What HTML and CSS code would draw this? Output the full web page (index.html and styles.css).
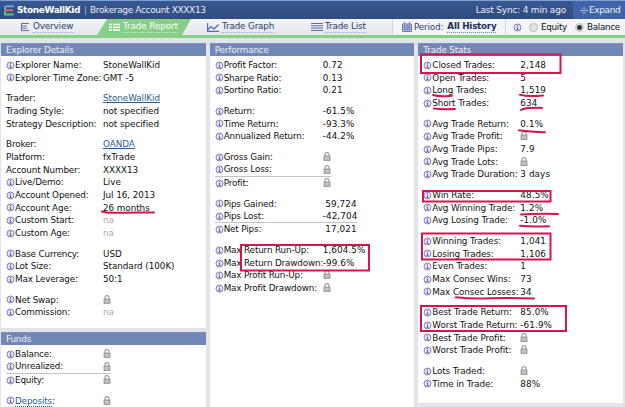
FILE: index.html
```html
<!DOCTYPE html>
<html>
    <head>
        <meta charset="utf-8">
        <title>StoneWallKid - Trade Report</title>
        <link rel="stylesheet" href="styles.css">
    </head>

    <body>
        <svg class="defs">
            <symbol id="info" viewBox="0 0 9 9">
                <circle cx="4.5" cy="4.5" r="3.5" fill="#e6e6f6" stroke="#7472ab" stroke-width=".9"/>
                <path d="M4.5 2.1v1M3.7 4.1h.9v2.3M3.5 6.5h2" fill="none" stroke="#5653a3" stroke-width=".9"/>
            </symbol>
            <symbol id="lock" viewBox="0 0 8 9">
                <path d="M2 4V2.6a2 2 0 0 1 4 0V4" fill="none" stroke="#999" stroke-width="1.1"/>
                <rect x="1" y="4" width="6" height="4.4" fill="#b5b5b5" stroke="#929292" stroke-width=".8"/>
                <path d="M2 5.5h4M2 7h4" stroke="#d4d4d4" stroke-width=".6"/>
            </symbol>
        </svg>

        <div class="topbar">
            <svg class="logo" viewBox="0 0 10 11">
                <path d="M2 1.2h8M1 1v4" stroke="#61a8ee" stroke-width="2"/>
                <path d="M1 5.3h8" stroke="#ee5a62" stroke-width="2"/>
                <path d="M1 6v3.5h8.5" fill="none" stroke="#66c477" stroke-width="2"/>
            </svg>
            <b class="user">StoneWallKid</b>
            <span class="bar">|</span>
            <span class="account">Brokerage Account XXXX13</span>
            <span class="sync">Last Sync: 4 min ago</span>
            <div class="expand">
                <svg viewBox="0 0 8 9"><path d="M1.5 3L4 .8 6.5 3zM1.5 6L4 8.2 6.5 6z" fill="#7d9bd2"/><path d="M0 4.5h8" stroke="#a4bbe4"/></svg>
                <span>Expand</span>
            </div>
        </div>

        <div class="tabs">
            <div class="tab overview">
                <svg viewBox="0 0 9 8"><path d="M0 .5h8M0 3h6M0 5.2h6M0 7.5h8M.5 0v8" stroke="#5c70a5" fill="none"/></svg>
                <a>Overview</a>
            </div>
            <div class="tab report">
                <svg viewBox="0 0 11 8"><path d="M0 1.5h3M0 4.2h3M0 7h3M4 1.5h7M4 4.2h7M4 7h7" stroke="#fff" stroke-width="1.6"/></svg>
                <a>Trade Report</a>
            </div>
            <div class="tab graph">
                <svg viewBox="0 0 12 9"><path d="M.6 0v8.4H12M1 6.5l3-3 3 2.5 4.5-4.5" fill="none" stroke="#556ba3" stroke-width="1.2"/></svg>
                <a>Trade Graph</a>
            </div>
            <div class="tab list">
                <svg viewBox="0 0 12 8"><path d="M0 .5h12M0 2.8h12M0 5.1h12M0 7.5h12" stroke="#5b6ea3"/></svg>
                <a>Trade List</a>
            </div>
            <div class="period">
                <svg viewBox="0 0 10 10"><path d="M.5 2h9v7.5h-9zM.5 4h9M.5 5.8h9M.5 7.6h9M2.8 2v7.5M5 2v7.5M7.2 2v7.5M2.5 0v2M7.5 0v2" fill="none" stroke="#5b70ab" stroke-width=".9"/></svg>
                <span>Period:</span>
                <b>All History</b>
            </div>
            <div class="mode">
                <svg class="info"><use href="#info"/></svg>
                <i class="radio"></i><span class="equity">Equity</span>
                <i class="radio on"></i><span class="balance">Balance</span>
            </div>
        </div>

        <div class="columns">
            <div class="column c1">
                <div class="panel">
                    <h2>Explorer Details</h2>
                    <div class="rows" id="details"></div>
                </div>
                <div class="panel funds">
                    <h2>Funds</h2>
                    <div class="rows" id="funds"></div>
                </div>
            </div>
            <div class="column c2">
                <div class="panel">
                    <h2>Performance</h2>
                    <div class="rows" id="performance"></div>
                </div>
            </div>
            <div class="column c3">
                <div class="panel">
                    <h2>Trade Stats</h2>
                    <div class="rows" id="stats"></div>
                </div>
            </div>
        </div>

        <!-- red marker pen over the report -->
        <svg class="marks" viewBox="0 0 625 407">
            <rect x="421" y="54.5" width="139.5" height="18.5"/>
            <rect x="423" y="191" width="127.5" height="10.5"/>
            <rect x="422" y="233.5" width="128.5" height="26"/>
            <rect x="421" y="306" width="145" height="25"/>
            <rect x="241" y="245" width="128" height="25.5"/>
            <path d="M102 211.5Q106 213 117 212.7T154 212.5"/>
            <path d="M433 95Q439 97 452 95.7"/>
            <path d="M520 94.8Q528 97 543 95.5"/>
            <path d="M434 108.5Q441 109.5 455 109"/>
            <path d="M521 110Q526 107 542 108"/>
            <path d="M519 130.3Q530 132 545 132.3"/>
            <path d="M521 214.5Q536 213.5 558 214"/>
            <path d="M520 225.8Q532 227 549 226.3"/>
            <path d="M456 297.3Q470 299 490 298.3T534 298.5"/>
        </svg>

        <script>
            // [label, value, flags]: p = no info icon, a = link value, l = link label,
            // n = greyed out, s = sum line below, r = right aligned
            // null starts a new group
            var details = [
                ["Explorer Name:", "StoneWallKid"],
                ["Explorer Time Zone:", "GMT -5"],
                null,
                ["Trader:", "StoneWallKid", "pa"],
                ["Trading Style:", "not specified", "p"],
                ["Strategy Description:", "not specified", "p"],
                null,
                ["Broker:", "OANDA", "pa"],
                ["Platform:", "fxTrade", "p"],
                ["Account Number:", "XXXX13", "p"],
                ["Live/Demo:", "Live"],
                ["Account Opened:", "Jul 16, 2013"],
                ["Account Age:", "26 months"],
                ["Custom Start:", "na", "n"],
                ["Custom Age:", "na", "n"],
                null,
                ["Base Currency:", "USD"],
                ["Lot Size:", "Standard (100K)"],
                ["Max Leverage:", "50:1"],
                null,
                ["Net Swap:", "lock"],
                ["Commission:", "na", "n"]
            ];

            var funds = [
                ["Balance:", "lock"],
                ["Unrealized:", "lock", "s"],
                ["Equity:", "lock"],
                null,
                ["Deposits:", "lock", "l"]
            ];

            var performanceRows = [
                ["Profit Factor:", "0.72"],
                ["Sharpe Ratio:", "0.13"],
                ["Sortino Ratio:", "0.21"],
                null,
                ["Return:", "-61.5%"],
                ["Time Return:", "-93.3%"],
                ["Annualized Return:", "-44.2%"],
                null,
                ["Gross Gain:", "lock"],
                ["Gross Loss:", "lock", "s"],
                ["Profit:", "lock"],
                null,
                ["Pips Gained:", "59,724", "r"],
                ["Pips Lost:", "-42,704", "rs"],
                ["Net Pips:", "17,021", "r"],
                null,
                ["Max Return Run-Up:", "1,604.5%"],
                ["Max Return Drawdown:", "-99.6%"],
                ["Max Profit Run-Up:", "lock"],
                ["Max Profit Drawdown:", "lock"]
            ];

            var stats = [
                ["Closed Trades:", "2,148"],
                ["Open Trades:", "5"],
                ["Long Trades:", "1,519"],
                ["Short Trades:", "634"],
                null,
                ["Avg Trade Return:", "0.1%"],
                ["Avg Trade Profit:", "lock"],
                ["Avg Trade Pips:", "7.9"],
                ["Avg Trade Lots:", "lock"],
                ["Avg Trade Duration:", "3 days"],
                null,
                ["Win Rate:", "48.5%"],
                ["Avg Winning Trade:", "1.2%"],
                ["Avg Losing Trade:", "-1.0%"],
                null,
                ["Winning Trades:", "1,041"],
                ["Losing Trades:", "1,106"],
                ["Even Trades:", "1"],
                ["Max Consec Wins:", "73"],
                ["Max Consec Losses:", "34"],
                null,
                ["Best Trade Return:", "85.0%"],
                ["Worst Trade Return:", "-61.9%"],
                ["Best Trade Profit:", "lock"],
                ["Worst Trade Profit:", "lock"],
                null,
                ["Lots Traded:", "lock"],
                ["Time in Trade:", "88%"]
            ];

            function genRow(row) {
                var flags = row[2] || "";
                var has = function (f) { return flags.indexOf(f) >= 0; };
                var label = row[0];
                var value = row[1];

                if (has("l")) label = "<a class='dotted'>" + label.slice(0, -1) + "</a>:";
                if (value == "lock") value = "<svg class='lock'><use href='#lock'/></svg>";
                if (has("a")) value = "<a>" + value + "</a>";

                var r = "<div class='row" + (has("s") ? " sum" : "") + (has("r") ? " num" : "") + "'>";
                r += "<div class='label'>";
                if (!has("p")) r += "<svg class='info'><use href='#info'/></svg>";
                r += "<span>" + label + "</span></div>";
                r += "<div class='value" + (has("n") ? " na" : "") + "'>" + value + "</div>";
                return r + "</div>";
            }

            function renderRows(id, rows) {
                var r = "<div class='group'>";
                for (var i = 0; i < rows.length; ++i) {
                    r += rows[i] ? genRow(rows[i]) : "</div><div class='group'>";
                }
                document.getElementById(id).innerHTML = r + "</div>";
            }

            renderRows("details", details);
            renderRows("funds", funds);
            renderRows("performance", performanceRows);
            renderRows("stats", stats);
        </script>
    </body>
</html>
```

FILE: styles.css
```css
* {
    box-sizing: border-box;
}

body {
    margin: 0;
    height: 407px;
    overflow: hidden;
    position: relative;
    background-color: #e3e4ea;
    font-family: Verdana, "DejaVu Sans", sans-serif;
    font-size: 8.8px;
    letter-spacing: -0.15px;
    color: #111;
    white-space: nowrap;
}

svg {
    display: block;
    flex: none;
}

.defs {
    display: none;
}

.topbar {
    display: flex;
    align-items: center;
    height: 19px;
    padding-left: 4px;
    border-top: 1px solid #7f9fd0;
    background: linear-gradient(#37588f, #304b80);
    color: #e9eef8;
    font-size: 9px;
}

.logo {
    width: 10px;
    height: 11px;
}

.user {
    width: 67px;
    margin-left: 3px;
    color: #fff;
    letter-spacing: -0.4px;
}

.bar {
    width: 6px;
    color: #a9b8d6;
}

.account {
    letter-spacing: -0.36px;
}

.sync {
    margin-left: auto;
    margin-right: 7px;
    letter-spacing: -0.2px;
}

.expand {
    display: flex;
    align-items: center;
    width: 52px;
    height: 18px;
    padding-left: 7px;
    background-color: #4164a8;
    letter-spacing: -0.4px;
}

.expand svg {
    width: 8px;
    height: 9px;
    margin-right: 1px;
}

.tabs {
    display: flex;
    height: 19px;
    border-bottom: 3px solid #86cf86;
    background: linear-gradient(#f3f4f7, #e4e6ec);
    color: #263f68;
}

.tab {
    display: flex;
    align-items: center;
}

.tab a {
    line-height: 11px;
    border-bottom: 1px dotted #9fb0cc;
}

.overview {
    width: 97px;
    padding-left: 21px;
}

.overview svg {
    width: 9px;
    height: 8px;
    margin-right: 3px;
}

.report {
    width: 94px;
    padding-left: 12px;
    background-color: #86cf86;
    clip-path: polygon(10px 0, 100% 0, 85px 100%, 0 100%);
    color: #fff;
}

.report a {
    letter-spacing: -0.1px;
    border-bottom-color: #c8ecc8;
}

.report svg {
    width: 11px;
    height: 8px;
    margin-right: 3px;
}

.graph {
    width: 104px;
    padding-left: 16px;
}

.graph svg {
    width: 12px;
    height: 9px;
    margin-right: 3px;
}

.list {
    width: 97px;
    padding-left: 16px;
}

.list svg {
    width: 12px;
    height: 8px;
    margin-right: 2px;
}

.period {
    display: flex;
    align-items: center;
    width: 113px;
    padding-left: 9px;
    border-left: 1px solid #cfd3de;
    background-color: #f4f5f9;
}

.period svg {
    width: 10px;
    height: 10px;
    margin-right: 2px;
}

.period b {
    margin-left: 4px;
    line-height: 11px;
    letter-spacing: -0.25px;
    color: #1c3054;
    border-bottom: 1px dotted #7085a8;
}

.mode {
    display: flex;
    align-items: center;
    flex: 1;
    padding-left: 7px;
    border-left: 1px solid #cfd3de;
    background-color: #f4f5f9;
    color: #111;
    letter-spacing: -0.3px;
}

.radio {
    width: 9px;
    height: 9px;
    border: 1px solid #bbb;
    border-radius: 50%;
    background-color: #e2e2e2;
}

.radio.on {
    background: radial-gradient(circle, #333 2px, #e6e6e6 3px);
}

.mode .info {
    margin-right: 7px;
}

.equity {
    width: 34px;
    margin-left: 3px;
}

.balance {
    margin-left: 3px;
}

.columns {
    display: flex;
    gap: 4px;
    padding: 5px 2px 0 1px;
}

.column {
    flex: 1;
    display: flex;
    flex-direction: column;
    gap: 4px;
}

.panel {
    background-color: #fff;
}

.c1 .panel {
    height: 285px;
}

.c1 .funds {
    height: 80px;
}

.c2 .panel {
    height: 369px;
}

.c3 .panel {
    height: 360px;
}

h2 {
    margin: 0;
    height: 13px;
    padding-left: 5px;
    line-height: 13px;
    font-size: 8.8px;
    font-weight: normal;
    color: #edf1fa;
    background-color: #7187b5;
    border-top: 1px solid #7d90bb;
}

.rows {
    padding: 3px 0 0 5px;
}

.group {
    margin-bottom: 8.1px;
}

.row {
    display: flex;
    width: max-content;
    height: 12.65px;
    line-height: 12.65px;
}

.label {
    display: flex;
    align-items: center;
    width: 97px;
}

.c2 .label {
    width: 108px;
}

.c3 .label {
    letter-spacing: -0.1px;
}

.value {
    letter-spacing: -0.05px;
}

.c2 .value,
.c3 .value {
    letter-spacing: 0.1px;
}

.info {
    width: 9px;
    height: 9px;
}

.sum {
    height: 13.2px;
    border-bottom: 1px solid #c3c3c3;
}

.num .value {
    width: 34px;
    text-align: right;
}

.na {
    color: #aaa;
}

.lock {
    width: 8px;
    height: 9px;
    margin-top: 1px;
}

.value a {
    color: #285f91;
    text-decoration: underline;
}

.dotted {
    color: #285f91;
    border-bottom: 1px dotted #285f91;
}

/* drawn over the panels */
.marks {
    position: absolute;
    left: 0;
    top: 0;
    width: 625px;
    height: 407px;
    fill: none;
    stroke: #d9134f;
    stroke-width: 2;
    stroke-linecap: round;
}
```
